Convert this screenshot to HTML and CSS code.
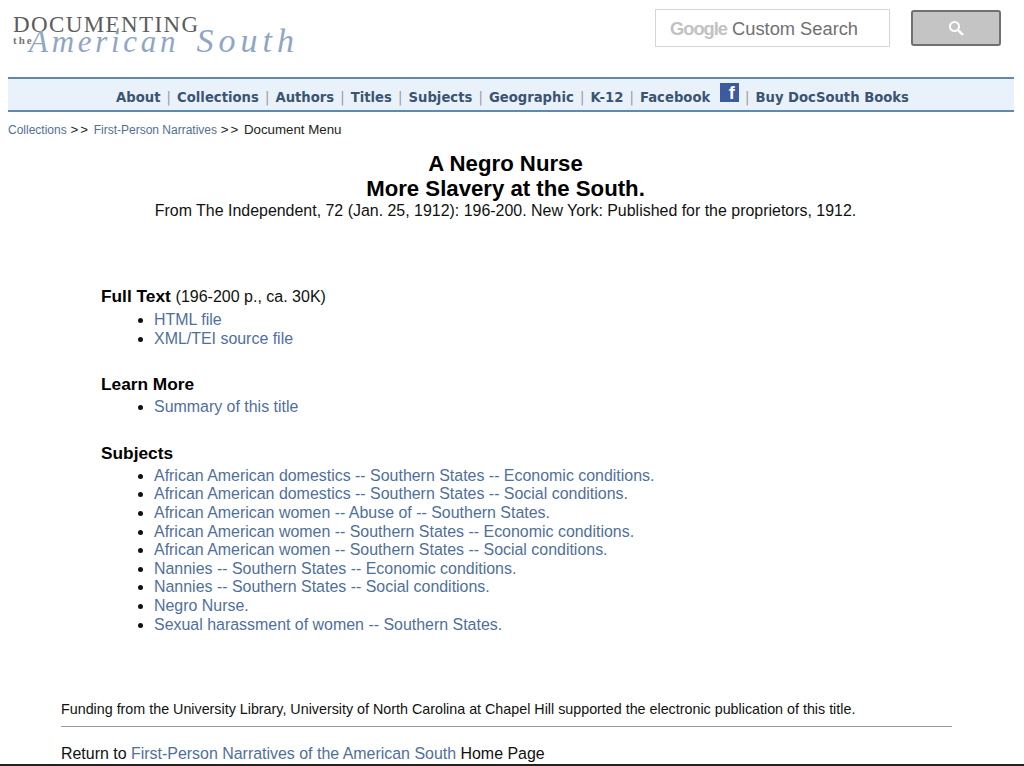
FILE: index.html
```html
<!DOCTYPE html>
<html lang="en">

<head>
    <meta charset="UTF-8">
    <title>A Negro Nurse: More Slavery at the South</title>
    <link rel="stylesheet" href="styles.css">
</head>

<body>
    <div class="page">
        <!-- Logo and search -->
        <div class="top">
            <div class="logo">
                <span class="logo-doc">DOCUMENTING</span>
                <span class="logo-the">the</span>
                <span class="logo-south">American <span class="south-word">South</span></span>
            </div>
            <div class="search">
                <div class="search-box"><span class="google">Google</span> Custom Search</div>
                <div class="search-btn">
                    <svg width="16" height="16" viewBox="0 0 16 16">
                        <circle cx="6.5" cy="6.5" r="4.5" fill="none" stroke="#fff" stroke-width="2"/>
                        <path d="M10 10l5 5" stroke="#fff" stroke-width="2.4"/>
                    </svg>
                </div>
            </div>
        </div>

        <div class="nav">
            <a href="#">About</a> <span class="sep">|</span>
            <a href="#">Collections</a> <span class="sep">|</span>
            <a href="#">Authors</a> <span class="sep">|</span>
            <a href="#">Titles</a> <span class="sep">|</span>
            <a href="#">Subjects</a> <span class="sep">|</span>
            <a href="#">Geographic</a> <span class="sep">|</span>
            <a href="#">K-12</a> <span class="sep">|</span>
            <a href="#">Facebook</a>
            <span class="fb">f</span> <span class="sep">|</span>
            <a href="#">Buy DocSouth Books</a>
        </div>

        <div class="crumbs">
            <a href="#">Collections</a> <span class="arrows">&gt;&gt;</span> <a href="#">First-Person Narratives</a> <span class="arrows">&gt;&gt;</span> Document Menu
        </div>

        <div class="title">
            <h1>A Negro Nurse<br>More Slavery at the South.</h1>
            <p>From The Independent, 72 (Jan. 25, 1912): 196-200. New York: Published for the proprietors, 1912.</p>
        </div>

        <div class="content">
            <h3>Full Text <span class="note">(196-200 p., ca. 30K)</span></h3>
            <ul>
                <li><a href="#">HTML file</a></li>
                <li><a href="#">XML/TEI source file</a></li>
            </ul>

            <h3>Learn More</h3>
            <ul>
                <li><a href="#">Summary of this title</a></li>
            </ul>

            <h3>Subjects</h3>
            <ul>
                <li><a href="#">African American domestics -- Southern States -- Economic conditions.</a></li>
                <li><a href="#">African American domestics -- Southern States -- Social conditions.</a></li>
                <li><a href="#">African American women -- Abuse of -- Southern States.</a></li>
                <li><a href="#">African American women -- Southern States -- Economic conditions.</a></li>
                <li><a href="#">African American women -- Southern States -- Social conditions.</a></li>
                <li><a href="#">Nannies -- Southern States -- Economic conditions.</a></li>
                <li><a href="#">Nannies -- Southern States -- Social conditions.</a></li>
                <li><a href="#">Negro Nurse.</a></li>
                <li><a href="#">Sexual harassment of women -- Southern States.</a></li>
            </ul>
        </div>

        <div class="footer">
            <p class="funding">Funding from the University Library, University of North Carolina at Chapel Hill supported the electronic publication of this title.</p>
            <hr>
            <p class="return">Return to <a href="#">First-Person Narratives of the American South</a> Home Page</p>
        </div>
    </div>
    <div class="bottom-edge"></div>
</body>

</html>
```

FILE: styles.css
```css
* {
    margin: 0;
    padding: 0;
    box-sizing: border-box;
}

html, body {
    height: 766px;
    overflow: hidden;
}

body {
    font-family: 'Liberation Sans', Arial, sans-serif;
    background-color: #fff;
    color: #111;
    position: relative;
}

a {
    color: #4f6f9c;
    text-decoration: none;
}

.page {
    padding: 0 10px 0 8px;
}

.top {
    display: flex;
    justify-content: space-between;
    height: 77px;
}

.logo {
    position: relative;
    width: 300px;
    height: 60px;
}

.logo > span {
    position: absolute;
    white-space: nowrap;
}

.logo-doc {
    left: 5px;
    top: 12px;
    font-family: 'Liberation Serif', serif;
    font-size: 23px;
    letter-spacing: 1.4px;
    color: #5c5c5c;
}

.logo-the {
    left: 5px;
    top: 34px;
    font-family: 'Liberation Serif', serif;
    font-size: 11px;
    font-weight: bold;
    letter-spacing: 2px;
    color: #777;
}

.logo-south {
    left: 21px;
    top: 22px;
    font-family: 'Liberation Serif', serif;
    font-style: italic;
    font-size: 31px;
    letter-spacing: 3.7px;
    word-spacing: 6px;
    color: #8fa6c6;
}

.south-word {
    font-size: 34px;
    letter-spacing: 5px;
}

.search {
    display: flex;
    gap: 21px;
    padding-top: 9px;
    padding-right: 13px;
}

.search-box {
    width: 235px;
    height: 38px;
    border: 1px solid #d6d6d6;
    padding-left: 14px;
    line-height: 38px;
    font-size: 18.3px;
    color: #707070;
    white-space: nowrap;
}

.google {
    color: #c2c2c2;
    font-weight: bold;
    letter-spacing: -1px;
}

.search-btn {
    width: 90px;
    height: 36px;
    margin-top: 1px;
    background-color: #c4c4c4;
    border: 2px solid #707070;
    border-radius: 3px;
    display: flex;
    align-items: center;
    justify-content: center;
}

.nav {
    height: 35px;
    padding-left: 3px;
    background-color: #e9f2fa;
    border-top: 2px solid #5f8aad;
    border-bottom: 2px solid #5f8aad;
    font-family: 'DejaVu Sans', Verdana, sans-serif;
    font-size: 13.2px;
    font-weight: bold;
    color: #999;
    text-align: center;
    line-height: 37px;
    white-space: nowrap;
}

.nav a {
    color: #3c5473;
}

.sep {
    font-weight: normal;
    margin: 0 1.5px;
}

.fb {
    display: inline-block;
    width: 19px;
    height: 19px;
    margin: 0 0 0 5px;
    background-color: #3b5a9f;
    color: #fff;
    font-family: 'Liberation Sans', sans-serif;
    font-size: 18px;
    line-height: 21px;
    text-align: right;
    padding-right: 4px;
    vertical-align: 0;
    overflow: hidden;
}

.crumbs {
    margin-top: 10px;
    font-size: 13.3px;
    line-height: 15px;
    color: #222;
}

.crumbs a {
    color: #54708f;
    font-size: 12px;
}

.arrows {
    letter-spacing: 2px;
}

.title {
    text-align: center;
    margin-top: 13px;
    margin-right: 11px;
}

.title h1 {
    font-size: 22.2px;
    line-height: 25px;
    color: #000;
}

.title p {
    font-size: 15.94px;
    line-height: 18px;
    margin-top: 1px;
}

.content {
    margin-top: 66px;
    padding-left: 93px;
    font-size: 15.95px;
    line-height: 18.6px;
}

.content h3 {
    font-size: 17.3px;
    line-height: 20px;
    color: #000;
    margin-top: 26px;
    margin-bottom: 4px;
}

.content h3:first-child {
    margin-top: 0;
}

.note {
    font-weight: normal;
    font-size: 16px;
    color: #111;
}

.content ul {
    padding-left: 53px;
}

.footer {
    margin-top: 66px;
    padding-left: 53px;
    width: 944px;
    font-size: 14.3px;
}

.funding {
    line-height: 18px;
}

.footer hr {
    border: none;
    border-top: 1px solid #999;
    margin-top: 8px;
}

.return {
    font-size: 15.95px;
    line-height: 19px;
    margin-top: 17px;
}

.bottom-edge {
    position: absolute;
    left: 0;
    right: 0;
    bottom: 0;
    height: 2px;
    background-color: #222;
}
```
